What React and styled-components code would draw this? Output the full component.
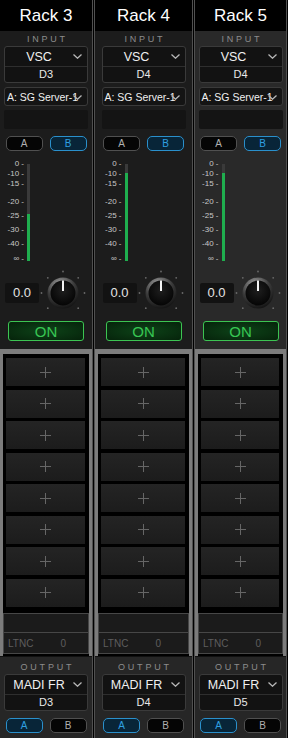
import React from 'react';
import styled, { createGlobalStyle } from 'styled-components';

const GlobalStyle = createGlobalStyle`
  html, body {
    margin: 0;
    padding: 0;
    background: #000;
  }
  body {
    font-family: "Liberation Sans", Arial, sans-serif;
  }
`;

const Console = styled.div`
  width: 288px;
  height: 738px;
  display: flex;
  gap: 1px;
  background: #000;
  overflow: hidden;
`;

const Strip = styled.div`
  flex: none;
  width: ${(p) => p.$width}px;
  display: flex;
  flex-direction: column;
  border-left: 1px solid #505050;
  border-right: 1px solid #505050;
  background: ${(p) => (p.$selected ? '#292929' : '#1c1c1c')};
  &:first-child {
    margin-left: -1px;
  }
`;

const Header = styled.div`
  height: 32px;
  line-height: 31px;
  background: #000;
  color: #fff;
  font-size: 17px;
  text-align: center;
`;

const Section = styled.div`
  width: 84px;
  margin: 0 auto;
  display: flex;
  flex-direction: column;
`;

const Label = styled.div`
  height: 15px;
  line-height: 16px;
  font-size: 9px;
  letter-spacing: 2.8px;
  text-indent: 2.8px;
  color: #8c8c8c;
  text-align: center;
`;

const SelectBox = styled.div`
  border: 1px solid #3a3a3a;
  border-radius: 3px;
  background: #121212;
  display: flex;
  flex-direction: column;
`;

const SelectMain = styled.div`
  height: 19px;
  display: flex;
  align-items: center;
  color: #f0f0f0;
  font-size: 12.5px;
  span {
    flex: 1;
    text-align: center;
  }
`;

const SelectSub = styled.div`
  height: 15px;
  line-height: 15px;
  border-top: 1px solid #2e2e2e;
  color: #e8e8e8;
  font-size: 11px;
  text-align: center;
`;

const Chevron = styled.svg`
  width: 9px;
  height: 5px;
  margin-right: 5px;
  flex: none;
`;

const RouteSelect = styled.div`
  margin-top: 4px;
  height: 17px;
  border: 1px solid #3a3a3a;
  border-radius: 3px;
  background: #141414;
  display: flex;
  align-items: center;
  padding-left: 2px;
  color: #f0f0f0;
  font-size: 10.5px;
  white-space: nowrap;
  overflow: hidden;
  position: relative;
  svg {
    position: absolute;
    right: 0;
    top: 7px;
  }
`;

const Blank = styled.div`
  margin-top: 4px;
  height: 19px;
  border-radius: 2px;
  background: #141414;
`;

const ABRow = styled.div`
  margin-top: ${(p) => p.$top}px;
  display: flex;
  justify-content: center;
  gap: 7px;
`;

const ABButton = styled.div`
  width: 35px;
  height: 13px;
  line-height: 13px;
  border-radius: 5px;
  font-size: 10px;
  text-align: center;
  border: 1px solid ${(p) => (p.$on ? '#2a90cc' : '#505050')};
  background: ${(p) => (p.$on ? '#082538' : '#050505')};
  color: ${(p) => (p.$on ? '#2fa0e0' : '#b0b0b0')};
`;

const Meter = styled.div`
  position: relative;
  margin-top: 8px;
  height: 106px;
`;

const Tick = styled.div`
  position: absolute;
  right: 64px;
  font-size: 8px;
  line-height: 8px;
  color: #c8c8c8;
  white-space: nowrap;
`;

const Bar = styled.div`
  position: absolute;
  left: 23px;
  top: 5px;
  width: 3px;
  height: 97px;
  background: #3a3a3a;
  display: flex;
  flex-direction: column;
  justify-content: flex-end;
`;

const Fill = styled.div`
  background: #1fae4e;
`;

const GainRow = styled.div`
  margin-top: 4px;
  height: 48px;
  display: flex;
  align-items: center;
`;

const GainValue = styled.div`
  width: 34px;
  height: 20px;
  line-height: 20px;
  margin-left: 1px;
  border-radius: 2px;
  background: #121212;
  color: #e4e4e4;
  font-size: 13px;
  text-align: center;
`;

const OnButton = styled.div`
  margin: 4px auto 0;
  width: 74px;
  height: 18px;
  line-height: 19px;
  border: 1px solid #3cc452;
  border-radius: 3px;
  background: radial-gradient(ellipse at center, #0d4318 0%, #06230b 100%);
  color: #38c653;
  font-size: 15px;
  text-align: center;
`;

const SlotFrame = styled.div`
  margin-top: 8px;
  flex: 1;
  background: #000;
  border-top: 5px solid #7c7c7c;
  border-left: 3px solid #7c7c7c;
  border-right: 3px solid #7c7c7c;
  padding: 4px 0 2px;
  display: flex;
  flex-direction: column;
  gap: 3.5px;
`;

const Slot = styled.div`
  height: 28px;
  margin: 0 4px 0 3px;
  background: linear-gradient(#242424, #1c1c1c);
  display: flex;
  align-items: center;
  justify-content: center;
`;

const TimeBox = styled.div`
  margin-top: 3px;
  border: 1px solid #474747;
  background: #1b1b1b;
  display: flex;
  flex-direction: column;
`;

const TimeTop = styled.div`
  height: 18px;
  border-bottom: 1px solid #474747;
`;

const TimeBottom = styled.div`
  height: 20px;
  display: flex;
  align-items: center;
  padding-left: 4px;
  font-size: 10px;
  color: #5e5e5e;
  gap: 27px;
`;

const Output = styled.div`
  height: 82px;
  flex: none;
  background: #262626;
  border-top: 1px solid #111;
  padding-top: 2px;
`;

const ChevronIcon = () => (
  <Chevron viewBox="0 0 9 5">
    <path d="M0.5 0.5 L4.5 4.2 L8.5 0.5" fill="none" stroke="#b8b8b8" strokeWidth="1.3" />
  </Chevron>
);

const Plus = () => (
  <svg width="11" height="11" viewBox="0 0 11 11">
    <path d="M5.5 0 V11 M0 5.5 H11" stroke="#666" strokeWidth="1" />
  </svg>
);

const Knob = () => {
  const dots = [-135, -90, -45, 0, 45, 90, 135].map((a) => {
    const r = (a * Math.PI) / 180;
    return [24 + Math.sin(r) * 21.5, 24 - Math.cos(r) * 21.5];
  });
  return (
    <svg width="48" height="48" viewBox="0 0 48 48">
      <defs>
        <radialGradient id="knobRim" cx="40%" cy="25%" r="80%">
          <stop offset="0%" stopColor="#a8a8a8" />
          <stop offset="55%" stopColor="#3c3c3c" />
          <stop offset="100%" stopColor="#101010" />
        </radialGradient>
        <radialGradient id="knobCap" cx="50%" cy="40%" r="60%">
          <stop offset="0%" stopColor="#1e1e1e" />
          <stop offset="100%" stopColor="#050505" />
        </radialGradient>
      </defs>
      {dots.map(([x, y], i) => (
        <circle key={i} cx={x} cy={y} r="0.9" fill="#6a6a6a" />
      ))}
      <circle cx="24" cy="24" r="15.5" fill="url(#knobRim)" />
      <circle cx="24" cy="24" r="12.5" fill="url(#knobCap)" />
      <line x1="24" y1="11.5" x2="24" y2="22" stroke="#f4f4f4" strokeWidth="2" />
    </svg>
  );
};

const scale = [
  ['0 -', 5],
  ['-10 -', 15],
  ['-15 -', 25],
  ['-20 -', 43],
  ['-25 -', 57],
  ['-30 -', 71],
  ['-40 -', 85],
  ['\u221e -', 100],
];

const racks = [
  { name: 'Rack 3', width: 92, input: 'D3', output: 'D3', fill: 47 },
  { name: 'Rack 4', width: 97, input: 'D4', output: 'D4', fill: 88 },
  { name: 'Rack 5', width: 91, input: 'D4', output: 'D5', fill: 88, selected: true },
];

const Rack = ({ rack }) => (
  <Strip $width={rack.width} $selected={rack.selected}>
    <Header>{rack.name}</Header>
    <Section>
      <Label>INPUT</Label>
      <SelectBox>
        <SelectMain>
          <span>VSC</span>
          <ChevronIcon />
        </SelectMain>
        <SelectSub>{rack.input}</SelectSub>
      </SelectBox>
      <RouteSelect>
        A: SG Server-1
        <ChevronIcon />
      </RouteSelect>
      <Blank />
      <ABRow $top={7}>
        <ABButton>A</ABButton>
        <ABButton $on>B</ABButton>
      </ABRow>
      <Meter>
        {scale.map(([text, y]) => (
          <Tick key={text} style={{ top: y - 4 }}>
            {text}
          </Tick>
        ))}
        <Bar>
          <Fill style={{ height: rack.fill }} />
        </Bar>
      </Meter>
      <GainRow>
        <GainValue>0.0</GainValue>
        <Knob />
      </GainRow>
      <OnButton>ON</OnButton>
    </Section>
    <SlotFrame>
      {Array.from({ length: 8 }, (_, i) => (
        <Slot key={i}>
          <Plus />
        </Slot>
      ))}
      <TimeBox>
        <TimeTop />
        <TimeBottom>
          <span>LTNC</span>
          <span>0</span>
        </TimeBottom>
      </TimeBox>
    </SlotFrame>
    <Output>
      <Section>
        <Label>OUTPUT</Label>
        <SelectBox>
          <SelectMain>
            <span>MADI FR</span>
            <ChevronIcon />
          </SelectMain>
          <SelectSub>{rack.output}</SelectSub>
        </SelectBox>
        <ABRow $top={7}>
          <ABButton $on>A</ABButton>
          <ABButton>B</ABButton>
        </ABRow>
      </Section>
    </Output>
  </Strip>
);

export default function App() {
  return (
    <>
      <GlobalStyle />
      <Console>
        {racks.map((r) => (
          <Rack key={r.name} rack={r} />
        ))}
      </Console>
    </>
  );
}
